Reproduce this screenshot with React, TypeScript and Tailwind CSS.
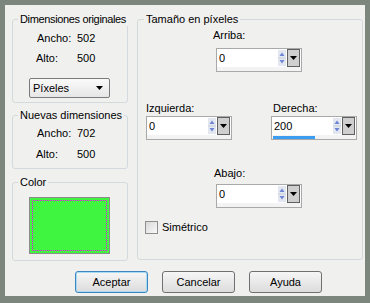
import React from "react";

function SpinInput({ value, bar }: { value: string; bar?: boolean }) {
  return (
    <div className="w-[86px] h-[24px] border border-[#a9a9a9] bg-[#f3f3f3] flex flex-col">
      <div className="flex h-[18px] bg-white">
        <div className="flex-1 pl-[2px] text-[11px] leading-[18px] text-black">{value}</div>
        <svg width="9" height="18" viewBox="0 0 9 18" className="block">
          <rect x="0" y="1" width="8" height="16" fill="#e3e8f0" />
          <line x1="0" y1="9" x2="8" y2="9" stroke="#c7cfdb" />
          <path d="M1.5 7 L4 3.5 L6.5 7 Z" fill="#6f84d6" />
          <path d="M1.5 11 L4 14.5 L6.5 11 Z" fill="#6f84d6" />
        </svg>
        <div className="w-[13px] h-[18px] mr-[1px] border border-[#5f5f5f] bg-[#cfcfcf] flex items-center justify-center">
          <svg width="7" height="4" viewBox="0 0 7 4" className="block">
            <path d="M0 0 H7 L3.5 4 Z" fill="#000" />
          </svg>
        </div>
      </div>
      <div className="flex-1 pt-[1px] pl-[1px]">
        {bar ? <div className="h-[3px] w-[42px] bg-[#3b9cf0]" /> : null}
      </div>
    </div>
  );
}

function Btn({ label, def }: { label: string; def?: boolean }) {
  return (
    <div
      className={
        "w-[73px] h-[22px] rounded-[3px] border flex items-center justify-center text-[11px] text-black bg-gradient-to-b from-[#f6f6f6] to-[#dcdcdc] " +
        (def ? "border-[#3c86c0] shadow-[inset_0_0_0_1px_#a8dcf5]" : "border-[#707070]")
      }
    >
      {label}
    </div>
  );
}

export default function App() {
  return (
    <div className="w-[370px] h-[303px] bg-[#7c867c] pt-[5px] pl-[5px] pr-[5px] pb-[7px] font-['Liberation_Sans',Arial,sans-serif] text-[11px] text-black">
      <div className="w-full h-full bg-[#f0f0ef] pt-[8px] pl-[7px]">
        <div className="flex">
          <div className="flex flex-col w-[116px]">
            <fieldset className="h-[90px] min-w-0 border border-[#d3d9dd] rounded-[3px]">
              <legend className="ml-[5px] px-[2px] leading-[13px] whitespace-nowrap tracking-[-0.35px]">Dimensiones originales</legend>
              <div className="flex mt-[6px] leading-[13px] pl-[24px]">
                <span className="w-[40px]">Ancho:</span>
                <span>502</span>
              </div>
              <div className="flex mt-[7px] leading-[13px] pl-[23px]">
                <span className="w-[41px]">Alto:</span>
                <span>500</span>
              </div>
              <div className="mt-[13px] ml-[16px] w-[81px] h-[20px] border border-[#7a7a7a] rounded-[2px] bg-gradient-to-b from-[#fbfbfb] to-[#e6e6e6] flex items-center justify-between pl-[3px] pr-[6px]">
                <span>Píxeles</span>
                <svg width="7" height="4" viewBox="0 0 7 4" className="block">
                  <path d="M0 0 H7 L3.5 4 Z" fill="#000" />
                </svg>
              </div>
            </fieldset>
            <fieldset className="mt-[6px] h-[60px] min-w-0 border border-[#d3d9dd] rounded-[3px]">
              <legend className="ml-[5px] px-[2px] leading-[13px] whitespace-nowrap">Nuevas dimensiones</legend>
              <div className="flex mt-[5px] leading-[13px] pl-[24px]">
                <span className="w-[40px]">Ancho:</span>
                <span>702</span>
              </div>
              <div className="flex mt-[8px] leading-[13px] pl-[23px]">
                <span className="w-[41px]">Alto:</span>
                <span>500</span>
              </div>
            </fieldset>
            <fieldset className="mt-[7px] h-[85px] min-w-0 border border-[#d3d9dd] rounded-[3px]">
              <legend className="ml-[5px] px-[2px] leading-[13px]">Color</legend>
              <div className="mt-[8px] ml-[16px] w-[81px] h-[57px] border border-[#8c8c8c] bg-[#3ff53f] p-[2px]">
                <div className="w-full h-full border border-dotted border-[#ff00ff]" />
              </div>
            </fieldset>
          </div>

          <fieldset className="ml-[9px] w-[226px] h-[247px] min-w-0 border border-[#d3d9dd] rounded-[3px]">
            <legend className="ml-[6px] px-[2px] leading-[13px] whitespace-nowrap">Tamaño en píxeles</legend>
            <div className="pl-[75px] mt-[3px] leading-[13px]">Arriba:</div>
            <div className="pl-[78px] mt-[6px]">
              <SpinInput value="0" />
            </div>
            <div className="flex mt-[30px]">
              <div className="w-[133px] pl-[8px] flex flex-col">
                <div className="leading-[13px]">Izquierda:</div>
                <div className="mt-[1px]">
                  <SpinInput value="0" />
                </div>
              </div>
              <div className="flex flex-col">
                <div className="leading-[13px] pl-[2px]">Derecha:</div>
                <div className="mt-[1px]">
                  <SpinInput value="200" bar />
                </div>
              </div>
            </div>
            <div className="pl-[76px] mt-[27px] leading-[13px]">Abajo:</div>
            <div className="pl-[78px] mt-[4px]">
              <SpinInput value="0" />
            </div>
            <div className="flex items-center pl-[7px] mt-[13px]">
              <div className="w-[13px] h-[13px] border border-[#8e8f8f] bg-gradient-to-br from-[#d8d8d8] to-[#fafafa]" />
              <span className="ml-[4px] leading-[13px]">Simétrico</span>
            </div>
          </fieldset>
        </div>

        <div className="flex gap-[14px] pl-[63px] mt-[10px]">
          <Btn label="Aceptar" def />
          <Btn label="Cancelar" />
          <Btn label="Ayuda" />
        </div>
      </div>
    </div>
  );
}
